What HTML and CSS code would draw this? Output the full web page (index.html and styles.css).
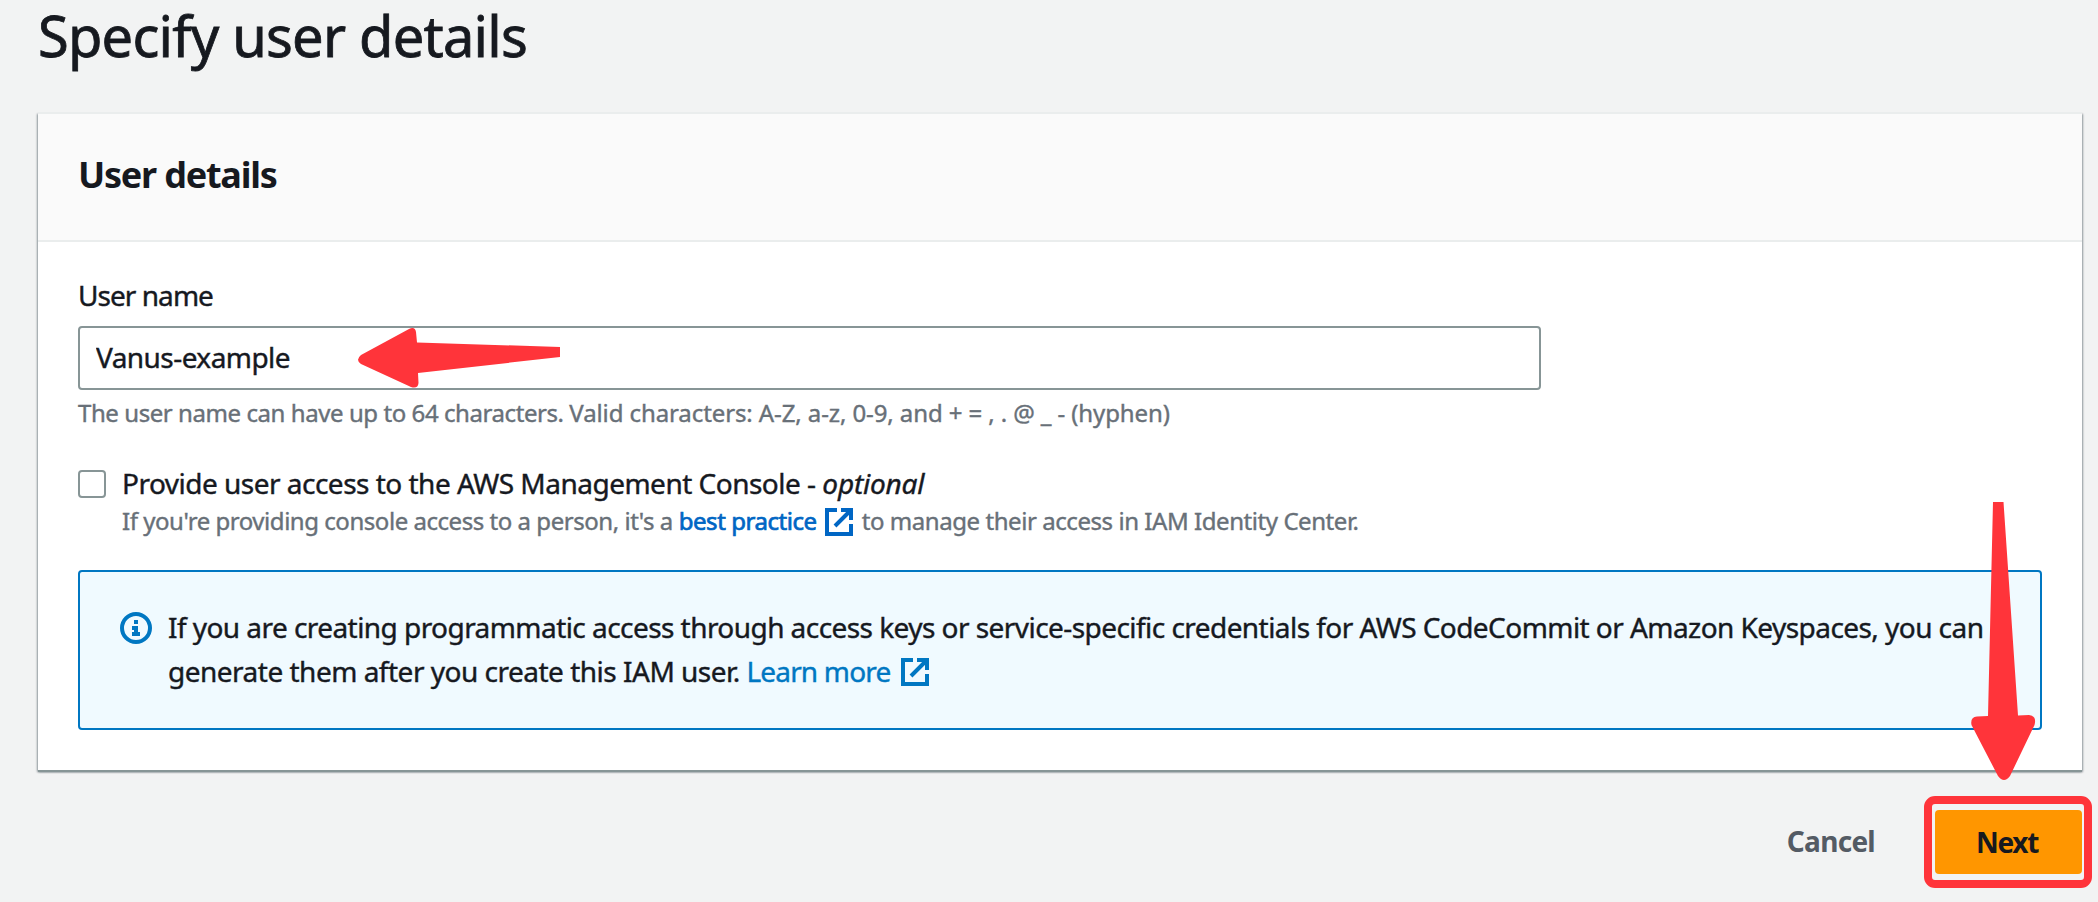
FILE: index.html
```html
<!DOCTYPE html>
<html lang="en">
<head>
<meta charset="utf-8">
<title>Specify user details</title>
<link rel="stylesheet" href="styles.css">
</head>
<body>
<svg class="sprite" aria-hidden="true">
  <symbol id="external" viewBox="0 0 28 28">
    <path d="M12 2H2v24h24V16M16 2h10v10M25 3 10 18" fill="none" stroke="currentColor" stroke-width="4"/>
  </symbol>
</svg>
<main class="page">
  <h1 class="page-title">Specify user details</h1>
  <section class="card">
    <header class="card-header"><h2 class="card-title">User details</h2></header>
    <div class="card-body">
      <label class="field-label" for="username">User name</label>
      <input class="field-input" id="username" type="text" value="Vanus-example">
      <p class="hint"><span>The user name can have up to 64 characters. </span><span class="hint-valid">Valid characters: A-Z, a-z, 0-9, and + = , . @ _ - (hyphen)</span></p>
      <div class="check-row">
        <span class="checkbox" role="checkbox" aria-checked="false"></span>
        <div class="check-text">
          <div class="check-label">Provide user access to the AWS Management Console - <em class="optional">optional</em></div>
          <div class="check-desc"><span>If you're providing console access to a person, it's a </span><a class="link-practice">best practice</a><svg class="ext ext-practice"><use href="#external"/></svg><span class="desc-tail">to manage their access in IAM Identity Center.</span></div>
        </div>
      </div>
      <div class="alert">
        <svg class="info" viewBox="0 0 32 32">
          <circle cx="16" cy="16" r="14" fill="none" stroke="currentColor" stroke-width="4"/>
          <path d="M14 8h4v4h-4zM12 14h6v6h2v4h-8v-4h2v-2h-2z" fill="currentColor"/>
        </svg>
        <p class="alert-text"><span class="alert-line">If you are creating programmatic access through access keys or service-specific credentials for AWS CodeCommit or Amazon Keyspaces, you can</span><br><span class="alert-line2">generate them after you create this IAM user. </span><a class="link-learn">Learn more</a><svg class="ext ext-learn"><use href="#external"/></svg></p>
      </div>
    </div>
  </section>
  <footer class="actions">
    <button class="btn cancel">Cancel</button>
    <div class="next-frame"><button class="btn next">Next</button></div>
  </footer>
</main>
<svg class="annotations" viewBox="0 0 2098 902" aria-hidden="true">
  <path d="M560 347 417 342.500 416 332Q415 326 409 329L361 355Q355 360 361 364L411 387Q418 389 418.500 383L418 373 560 357Z"/>
  <path d="M1993 502H2003.500L2018 715.500 2029 715Q2037 716 2034.500 725L2010 776Q2004 784 1998 776L1971.500 725Q1970 717 1977 716.500L1988 716Z"/>
</svg>
</body>
</html>
```
FILE: styles.css
```css
* { box-sizing: border-box; }
body {
  margin: 0;
  background: #f2f3f3;
  color: #16191f;
  font-family: "Noto Sans", "Open Sans", sans-serif;
  font-size: 28px;
  -webkit-text-stroke: 0.4px;
}
h1, h2, p { margin: 0; font-weight: 400; }
.sprite { position: absolute; width: 0; height: 0; }
.page { height: 902px; padding: 1px 16px 0 38px; }
.page-title { font-size: 56px; line-height: 68px; height: 111px; letter-spacing: -0.78px; -webkit-text-stroke: 0.8px; }
.card {
  width: 2044px;
  height: 658px;
  background: #fff;
  border-top: 2px solid #eaeded;
  box-shadow: 0 2px 0 0 #879596, 0 2px 2px 0 rgba(0, 28, 36, 0.3), 1px 2px 2px 0 rgba(0, 28, 36, 0.3), -1px 2px 2px 0 rgba(0, 28, 36, 0.3);
}
.card-header { height: 128px; padding: 39px 40px 0; background: #fafafa; border-bottom: 2px solid #eaeded; }
.card-title { font-size: 36px; font-weight: 700; line-height: 44px; letter-spacing: -1.22px; -webkit-text-stroke: 0; }
.card-body { padding: 31px 40px 0; }
.field-label { display: block; line-height: 44px; letter-spacing: -0.95px; }
.field-input {
  display: block;
  width: 1463px;
  height: 64px;
  margin-top: 9px;
  padding: 0 16px 2px;
  border: 2px solid #879596;
  border-radius: 4px;
  background: #fff;
  color: #16191f;
  font: inherit;
  letter-spacing: -0.55px;
}
.hint { margin-top: 7px; font-size: 24px; line-height: 32px; color: #687078; letter-spacing: -0.43px; white-space: pre; }
.hint-valid { letter-spacing: -0.1px; }
.check-row { display: flex; gap: 16px; margin-top: 34px; }
.checkbox { width: 28px; height: 28px; margin-top: 7px; border: 2px solid #879596; border-radius: 4px; }
.check-label { line-height: 40px; letter-spacing: -0.51px; white-space: nowrap; }
.optional { letter-spacing: -0.2px; }
.check-desc { display: flex; align-items: center; height: 32px; margin-top: 1px; font-size: 24px; color: #687078; letter-spacing: -0.46px; white-space: pre; }
.link-practice { color: #0066c4; letter-spacing: -0.44px; -webkit-text-stroke: 0.7px; }
.ext { width: 28px; height: 28px; flex: none; }
.ext-practice { margin: 4px 0 0 8px; color: #0066c4; }
.desc-tail { margin-left: 9px; letter-spacing: -0.44px; }
.alert {
  display: flex;
  height: 160px;
  margin-top: 34px;
  padding: 33px 0 0 40px;
  background: #f0faff;
  border: 2px solid #0077c2;
  border-radius: 4px;
}
.info { width: 32px; height: 32px; margin-top: 7px; color: #0077c2; }
.alert-text { margin-left: 16px; line-height: 44px; white-space: nowrap; }
.alert-line { letter-spacing: -0.555px; }
.alert-line2 { letter-spacing: -0.5px; white-space: pre; }
.link-learn { color: #0077c2; letter-spacing: -0.83px; }
.ext-learn { margin-left: 11px; color: #0077c2; vertical-align: -4px; }
.actions { display: flex; justify-content: flex-end; padding: 26px 6px 0 0; margin-right: -16px; }
.btn { border: 0; background: none; padding: 0; font: inherit; font-weight: 700; white-space: nowrap; -webkit-text-stroke: 0; }
.cancel { height: 64px; margin: 14px 49px 0 0; padding-bottom: 2px; color: #545b64; letter-spacing: -0.72px; }
.next-frame { width: 168px; height: 92px; padding: 6px 2px 6px 3px; border: 8px solid #ff343a; border-radius: 11px; }
.next { width: 147px; height: 64px; padding: 0 3px 1px 0; background: #ff9600; color: #16191f; border-radius: 4px; letter-spacing: -1.3px; }
.annotations { position: absolute; left: 0; top: 0; width: 2098px; height: 902px; fill: #ff343a; pointer-events: none; }
```
